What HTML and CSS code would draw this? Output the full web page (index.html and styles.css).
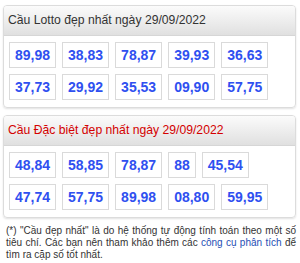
FILE: index.html
```html
<!DOCTYPE html>
<html lang="vi">
<head>
<meta charset="utf-8">
<link rel="stylesheet" href="styles.css">
</head>
<body>
<div class="page">
  <div class="panel">
    <div class="panel-head">Cầu Lotto đẹp nhất ngày 29/09/2022</div>
    <div class="panel-body">
      <span class="num">89,98</span><span class="num">38,83</span><span class="num">78,87</span><span class="num">39,93</span><span class="num">36,63</span>
      <span class="num">37,73</span><span class="num">29,92</span><span class="num">35,53</span><span class="num">09,90</span><span class="num">57,75</span>
    </div>
  </div>
  <div class="panel">
    <div class="panel-head red">Cầu Đặc biệt đẹp nhất ngày 29/09/2022</div>
    <div class="panel-body">
      <span class="num">48,84</span><span class="num">58,85</span><span class="num">78,87</span><span class="num">88</span><span class="num">45,54</span>
      <span class="num">47,74</span><span class="num">57,75</span><span class="num">89,98</span><span class="num">08,80</span><span class="num">59,95</span>
    </div>
  </div>
  <p class="note">(*) "Cầu đẹp nhất" là do hệ thống tự động tính toán theo một số tiêu chí. Các bạn nên tham khảo thêm các <a href="#">công cụ phân tích</a> để tìm ra cặp số tốt nhất.</p>
</div>
</body>
</html>
```

FILE: styles.css
```css
* { box-sizing: border-box; }
html, body { margin: 0; padding: 0; background: #fff; }
.page {
  padding: 5px 4px 0 3px;
  font-family: "Liberation Sans", Arial, sans-serif;
  display: flex;
  flex-direction: column;
  gap: 7px;
}
.panel {
  border: 1px solid #dcdcdc;
  border-radius: 4px;
  box-shadow: 0 1px 2px rgba(0,0,0,0.12);
  overflow: hidden;
}
.panel-head {
  height: 30px;
  line-height: 29px;
  padding-left: 4px;
  font-size: 12.2px;
  color: #333;
  background: linear-gradient(#fbfbfb, #e0e0e0);
  border-bottom: 1px solid #d6d6d6;
}
.panel-head.red { color: #d40000; }
.panel-body {
  display: flex;
  flex-wrap: wrap;
  column-gap: 6px;
  row-gap: 6px;
  padding: 6px 5px 7px 5px;
}
.num {
  display: block;
  border: 1px solid #dadada;
  padding: 4px 5px;
  font-size: 14px;
  line-height: 16px;
  font-weight: bold;
  color: #2f50f0;
}
.note {
  margin: 0;
  font-size: 10px;
  line-height: 12px;
  color: #333;
  text-align: justify;
  padding: 0 0 0 3px;
}
.note a { color: #1f4fb5; text-decoration: none; }
```
